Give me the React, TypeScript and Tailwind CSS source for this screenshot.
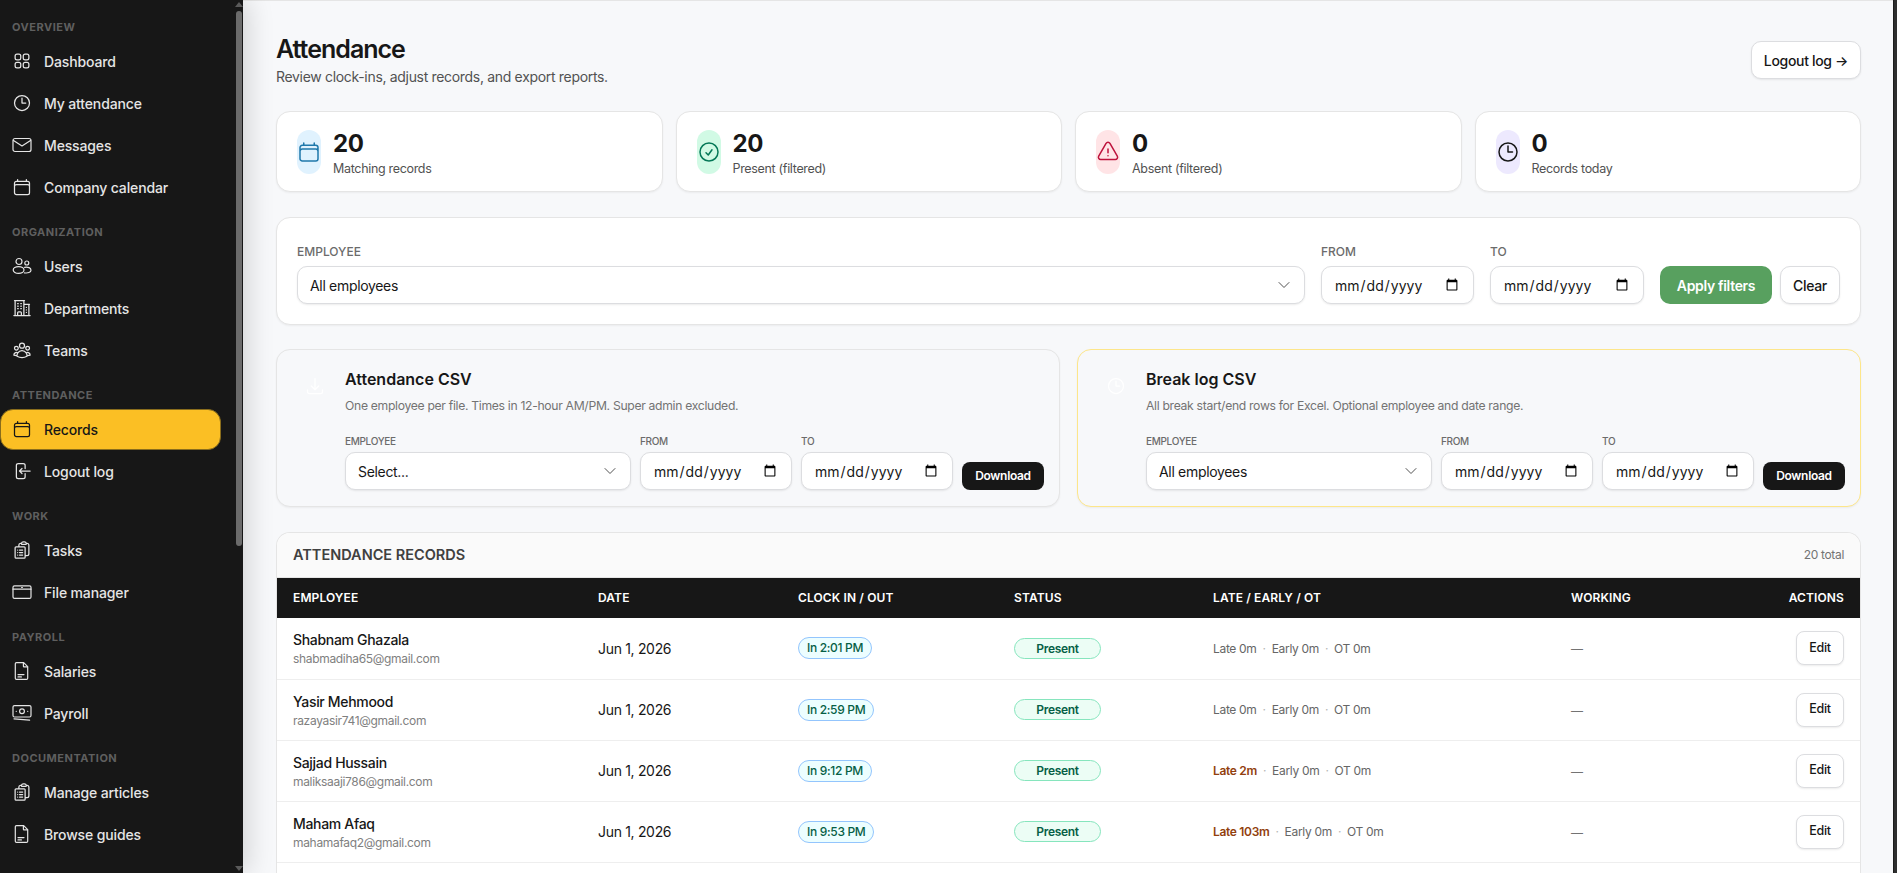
import {
  HiOutlineArrowDownTray,
  HiOutlineArrowLeftOnRectangle,
  HiOutlineBuildingOffice2,
  HiOutlineCalendar,
  HiOutlineCheckCircle,
  HiOutlineChevronDown,
  HiOutlineClipboardDocumentList,
  HiOutlineClock,
  HiOutlineExclamationTriangle,
  HiOutlineSquares2X2,
  HiOutlineUserGroup,
} from 'react-icons/hi2';
import type { ComponentType, ReactNode } from 'react';

type IconProps = { className?: string };
type Icon = ComponentType<IconProps>;
type NavItem = { label: string; icon: Icon; active?: boolean };

const Line = ({ className, children }: IconProps & { children: ReactNode }) => (
  <svg viewBox="0 0 20 20" fill="none" stroke="currentColor" strokeWidth={1.2} strokeLinecap="round" strokeLinejoin="round" className={className}>
    {children}
  </svg>
);

const MailIcon = ({ className }: IconProps) => (
  <Line className={className}>
    <rect x="1" y="3.5" width="18" height="13" rx="2" />
    <path d="M1.5 5.5 10 11l8.5-5.5" />
  </Line>
);

const UsersIcon = ({ className }: IconProps) => (
  <Line className={className}>
    <circle cx="7" cy="5.5" r="3" />
    <circle cx="14.8" cy="7" r="2" />
    <ellipse cx="6.6" cy="14" rx="5.4" ry="3.4" />
    <path d="M12.6 11.3c3.4-.7 6.4.7 6.4 2.9s-3.4 3.2-6.6 2.6" />
  </Line>
);

const FolderWindowIcon = ({ className }: IconProps) => (
  <Line className={className}>
    <rect x="1" y="3.8" width="18" height="12.6" rx="1.5" />
    <path d="M1 7.2h18M9.6 5.5h.8" />
  </Line>
);

const PageIcon = ({ className }: IconProps) => (
  <Line className={className}>
    <path d="M4.5 1.6h7.2l4 4v11.6a1.2 1.2 0 0 1-1.2 1.2H4.5a1.2 1.2 0 0 1-1.2-1.2V2.8a1.2 1.2 0 0 1 1.2-1.2Z" />
    <path d="M11.4 1.8v3.5a.6.6 0 0 0 .6.6h3.5M6 13.6h6M6 15.9h3.4" />
  </Line>
);

const CashIcon = ({ className }: IconProps) => (
  <Line className={className}>
    <rect x="1" y="2.6" width="18" height="11.4" rx="1.5" />
    <circle cx="10" cy="8.3" r="2.4" />
    <path d="M4.2 8.3h.1M15.7 8.3h.1M2 15.8l15.6 1.4" />
  </Line>
);

const NAV: { title: string; items: NavItem[] }[] = [
  {
    title: 'OVERVIEW',
    items: [
      { label: 'Dashboard', icon: HiOutlineSquares2X2 },
      { label: 'My attendance', icon: HiOutlineClock },
      { label: 'Messages', icon: MailIcon },
      { label: 'Company calendar', icon: HiOutlineCalendar },
    ],
  },
  {
    title: 'ORGANIZATION',
    items: [
      { label: 'Users', icon: UsersIcon },
      { label: 'Departments', icon: HiOutlineBuildingOffice2 },
      { label: 'Teams', icon: HiOutlineUserGroup },
    ],
  },
  {
    title: 'ATTENDANCE',
    items: [
      { label: 'Records', icon: HiOutlineCalendar, active: true },
      { label: 'Logout log', icon: HiOutlineArrowLeftOnRectangle },
    ],
  },
  {
    title: 'WORK',
    items: [
      { label: 'Tasks', icon: HiOutlineClipboardDocumentList },
      { label: 'File manager', icon: FolderWindowIcon },
    ],
  },
  {
    title: 'PAYROLL',
    items: [
      { label: 'Salaries', icon: PageIcon },
      { label: 'Payroll', icon: CashIcon },
    ],
  },
  {
    title: 'DOCUMENTATION',
    items: [
      { label: 'Manage articles', icon: HiOutlineClipboardDocumentList },
      { label: 'Browse guides', icon: PageIcon },
    ],
  },
];

const STATS = [
  { value: '20', label: 'Matching records', icon: HiOutlineCalendar, tone: 'bg-[#e0f2fe] text-[#1f78ab]' },
  { value: '20', label: 'Present (filtered)', icon: HiOutlineCheckCircle, tone: 'bg-[#d1fae5] text-[#047857]' },
  { value: '0', label: 'Absent (filtered)', icon: HiOutlineExclamationTriangle, tone: 'bg-[#ffe4e6] text-[#be123c]' },
  { value: '0', label: 'Records today', icon: HiOutlineClock, tone: 'bg-[#ede9fe] text-[#171717]' },
];

const ROWS = [
  { name: 'Shabnam Ghazala', email: 'shabmadiha65@gmail.com', clockIn: 'In 2:01 PM', late: 'Late 0m', lateHit: false },
  { name: 'Yasir Mehmood', email: 'razayasir741@gmail.com', clockIn: 'In 2:59 PM', late: 'Late 0m', lateHit: false },
  { name: 'Sajjad Hussain', email: 'maliksaaji786@gmail.com', clockIn: 'In 9:12 PM', late: 'Late 2m', lateHit: true },
  { name: 'Maham Afaq', email: 'mahamafaq2@gmail.com', clockIn: 'In 9:53 PM', late: 'Late 103m', lateHit: true },
];

const fieldBox = 'h-[38px] rounded-[10px] border border-[#dcdde0] bg-white text-[14px] text-[#171717] shadow-[0_1px_2px_rgba(0,0,0,0.08)]';
const labelText = 'font-medium uppercase text-[#6b6b6b]';

const Sidebar = () => (
  <aside className="relative z-10 flex h-full w-[243px] shrink-0 bg-[#171717] shadow-[6px_0_24px_rgba(0,0,0,0.14)]">
    <nav className="flex w-[234px] flex-col pt-[19px]">
      {NAV.map((section) => (
        <div key={section.title} className="mb-[16px]">
          <div className="mb-[5px] h-[16px] pl-[12px] text-[11px] font-bold leading-[16px] tracking-[0.045em] text-[#5f5f5f]">
            {section.title}
          </div>
          {section.items.map((item) => (
            <div key={item.label} className="flex h-[42px] w-[221px] items-center">
              <div
                className={
                  item.active
                    ? 'flex h-[41px] w-full items-center gap-[12px] rounded-[13px] border border-[#8a6d1c] bg-[#fbbf24] pl-[11px] text-[14px] font-medium tracking-[-0.01em] text-[#171717]'
                    : 'flex h-[41px] w-full items-center gap-[12px] pl-[12px] text-[14px] font-medium tracking-[-0.01em] text-[#e5e5e5]'
                }
              >
                <item.icon className="h-[20px] w-[20px] shrink-0" />
                <span>{item.label}</span>
              </div>
            </div>
          ))}
        </div>
      ))}
    </nav>
    <div className="flex w-[9px] flex-col items-center pt-[2px]">
      <div className="h-0 w-0 border-x-[4px] border-b-[5px] border-x-transparent border-b-[#5a5a5a]" />
      <div className="mt-[4px] h-[535px] w-[6px] rounded-full bg-[#6b6b6b]" />
      <div className="mt-auto mb-[2px] h-0 w-0 border-x-[4px] border-t-[5px] border-x-transparent border-t-[#5a5a5a]" />
    </div>
  </aside>
);

const StatCard = ({ stat }: { stat: (typeof STATS)[number] }) => (
  <div className="flex h-[81px] flex-1 items-center gap-[12px] rounded-[14px] border border-[#e5e5e5] bg-white pl-[20px] pr-[19px] shadow-[0_1px_2px_rgba(0,0,0,0.05)]">
    <div className={`flex h-[44px] w-[24px] shrink-0 items-center justify-center rounded-full ${stat.tone}`}>
      <stat.icon className="h-[24px] w-[24px] shrink-0" />
    </div>
    <div className="pt-[2px]">
      <div className="text-[24px] font-bold leading-[30px] text-[#171717]">{stat.value}</div>
      <div className="mt-[2px] text-[12.5px] leading-[16px] text-[#525252]">{stat.label}</div>
    </div>
  </div>
);

const DateField = ({ className }: { className: string }) => (
  <input type="date" className={`${fieldBox} ${className} px-[12px] font-[inherit] tracking-normal`} />
);

const SelectField = ({ value, className }: { value: string; className: string }) => (
  <div className={`${fieldBox} ${className} flex items-center justify-between px-[12px]`}>
    <span>{value}</span>
    <HiOutlineChevronDown className="h-[16px] w-[16px] text-[#525252]" />
  </div>
);

const ExportCard = ({
  title,
  desc,
  value,
  icon: CardIcon,
  accent,
}: {
  title: string;
  desc: string;
  value: string;
  icon: Icon;
  accent: string;
}) => (
  <div className={`flex h-[158px] flex-1 rounded-[14px] border bg-[#f7f8fa] pl-[28px] pr-[15px] pt-[20px] shadow-[0_1px_2px_rgba(0,0,0,0.05)] ${accent}`}>
    <div className="w-[40px] shrink-0 pt-[6px]">
      <CardIcon className="h-[20px] w-[20px] text-white" />
    </div>
    <div className="min-w-0 flex-1">
      <div className="text-[16px] font-semibold leading-[18px] tracking-normal text-[#171717]">{title}</div>
      <div className="mt-[10px] text-[12.2px] leading-[16px] text-[#737373]">{desc}</div>
      <div className="mt-[21px] flex items-end gap-[9px]">
        <div className="w-[286px]">
          <div className={`${labelText} mb-[5px] text-[10px] leading-[12px]`}>Employee</div>
          <SelectField value={value} className="w-full" />
        </div>
        <div className="w-[152px]">
          <div className={`${labelText} mb-[5px] text-[10px] leading-[12px]`}>From</div>
          <DateField className="w-full" />
        </div>
        <div className="w-[152px]">
          <div className={`${labelText} mb-[5px] text-[10px] leading-[12px]`}>To</div>
          <DateField className="w-full" />
        </div>
        <button className="h-[28px] w-[82px] shrink-0 rounded-[8px] bg-[#171717] text-[12px] font-semibold text-white">
          Download
        </button>
      </div>
    </div>
  </div>
);

const RecordsTable = () => (
  <div className="overflow-hidden rounded-t-[14px] border border-b-0 border-[#e5e5e5] bg-white">
    <div className="flex h-[45px] items-center justify-between border-b border-[#e5e5e5] bg-[#fafafa] px-[16px]">
      <span className="text-[14.5px] font-semibold tracking-normal text-[#404040]">ATTENDANCE RECORDS</span>
      <span className="text-[12px] text-[#737373]">20 total</span>
    </div>
    <table className="w-full table-fixed text-left">
      <colgroup>
        <col className="w-[305px]" />
        <col className="w-[200px]" />
        <col className="w-[216px]" />
        <col className="w-[199px]" />
        <col className="w-[358px]" />
        <col className="w-[150px]" />
        <col />
      </colgroup>
      <thead>
        <tr className="h-[40px] bg-[#171717] text-[12px] tracking-[0.01em] text-white">
          <th className="px-[16px] font-semibold">EMPLOYEE</th>
          <th className="px-[16px] font-semibold">DATE</th>
          <th className="px-[16px] font-semibold">CLOCK IN / OUT</th>
          <th className="px-[16px] font-semibold">STATUS</th>
          <th className="px-[16px] font-semibold">LATE / EARLY / OT</th>
          <th className="px-[16px] font-semibold">WORKING</th>
          <th className="px-[16px] text-right font-semibold">ACTIONS</th>
        </tr>
      </thead>
      <tbody>
        {ROWS.map((row) => (
          <tr key={row.email} className="h-[61px] border-b border-[#eeeeee]">
            <td className="px-[16px] pt-[2px]">
              <div className="text-[14px] font-medium leading-[18px] text-[#171717]">{row.name}</div>
              <div className="mt-[2px] text-[12px] leading-[16px] text-[#808080]">{row.email}</div>
            </td>
            <td className="px-[16px] text-[14px] text-[#171717]">Jun 1, 2026</td>
            <td className="px-[16px]">
              <span className="block h-[22px] w-fit rounded-full border border-[#93c5fd] bg-[#ecfeff] px-[8px] text-[12px] font-medium leading-[20px] text-[#065f46]">
                {row.clockIn}
              </span>
            </td>
            <td className="px-[16px]">
              <span className="block h-[21px] w-[87px] rounded-full border border-[#86e5bd] bg-[#ecfdf5] text-center text-[12px] font-semibold leading-[19px] text-[#065f46]">
                Present
              </span>
            </td>
            <td className="px-[16px] pt-[1px] text-[12px] text-[#666666]">
              <span className={row.lateHit ? 'font-semibold text-[#92400e]' : ''}>{row.late}</span>
              <span className="mx-[6px] text-[#b5b5b5]">·</span>
              <span>Early 0m</span>
              <span className="mx-[6px] text-[#b5b5b5]">·</span>
              <span>OT 0m</span>
            </td>
            <td className="px-[16px] pt-[2px] text-[12px] text-[#737373]">—</td>
            <td className="px-[16px]">
              <button className="ml-auto block h-[34px] w-[48px] rounded-[8px] border border-[#dcdde0] bg-white text-[12.5px] font-medium text-[#171717] shadow-[0_1px_2px_rgba(0,0,0,0.08)]">
                Edit
              </button>
            </td>
          </tr>
        ))}
        <tr className="h-[61px]">
          <td colSpan={7} />
        </tr>
      </tbody>
    </table>
  </div>
);

export default function App() {
  return (
    <div className="flex h-[873px] w-[1897px] overflow-hidden bg-[#f7f8fa] font-['Inter',sans-serif] tracking-[-0.02em]">
      <Sidebar />
      <main className="min-w-0 flex-1 overflow-hidden border-t border-[#e5e5e5] pl-[33px] pr-[32px] pt-[27px]">
        <div className="flex h-[50px] items-start justify-between">
          <div className="pt-[7px]">
            <h1 className="text-[25px] font-semibold leading-[28px] tracking-[-0.04em] text-[#171717]">Attendance</h1>
            <p className="mt-[4px] text-[14px] leading-[20px] text-[#525252]">
              Review clock-ins, adjust records, and export reports.
            </p>
          </div>
          <button className="mt-[13px] h-[38px] w-[110px] rounded-[10px] border border-[#dcdde0] bg-white text-[14px] font-medium text-[#171717] shadow-[0_1px_2px_rgba(0,0,0,0.08)]">
            Logout log →
          </button>
        </div>

        <div className="mt-[33px] flex gap-[13px]">
          {STATS.map((stat) => (
            <StatCard key={stat.label} stat={stat} />
          ))}
        </div>

        <div className="mt-[25px] flex h-[108px] items-end gap-[16px] rounded-[14px] border border-[#e5e5e5] bg-white pb-[20px] pl-[20px] pr-[20px] shadow-[0_1px_2px_rgba(0,0,0,0.05)]">
          <div className="flex-1">
            <div className={`${labelText} mb-[6px] text-[12px] leading-[16px] tracking-normal`}>Employee</div>
            <SelectField value="All employees" className="w-full" />
          </div>
          <div className="w-[153px]">
            <div className={`${labelText} mb-[6px] text-[12px] leading-[16px] tracking-normal`}>From</div>
            <DateField className="w-full" />
          </div>
          <div className="w-[154px]">
            <div className={`${labelText} mb-[6px] text-[12px] leading-[16px] tracking-normal`}>To</div>
            <DateField className="w-full" />
          </div>
          <div className="flex items-end gap-[8px]">
            <button className="h-[38px] w-[112px] rounded-[10px] bg-[#58a05f] text-[14px] font-semibold text-white">
              Apply filters
            </button>
            <button className="h-[38px] w-[60px] rounded-[10px] border border-[#dcdde0] bg-white text-[14px] font-medium text-[#171717] shadow-[0_1px_2px_rgba(0,0,0,0.08)]">
              Clear
            </button>
          </div>
        </div>

        <div className="mt-[24px] flex gap-[17px]">
          <ExportCard
            title="Attendance CSV"
            desc="One employee per file. Times in 12-hour AM/PM. Super admin excluded."
            value="Select..."
            icon={HiOutlineArrowDownTray}
            accent="border-[#e5e5e5]"
          />
          <ExportCard
            title="Break log CSV"
            desc="All break start/end rows for Excel. Optional employee and date range."
            value="All employees"
            icon={HiOutlineClock}
            accent="border-[#fde68a]"
          />
        </div>

        <div className="mt-[25px]">
          <RecordsTable />
        </div>
      </main>
      <div className="w-[4px] shrink-0 border-l border-[#1c1c1c] bg-[#2e2e2e]" />
    </div>
  );
}
